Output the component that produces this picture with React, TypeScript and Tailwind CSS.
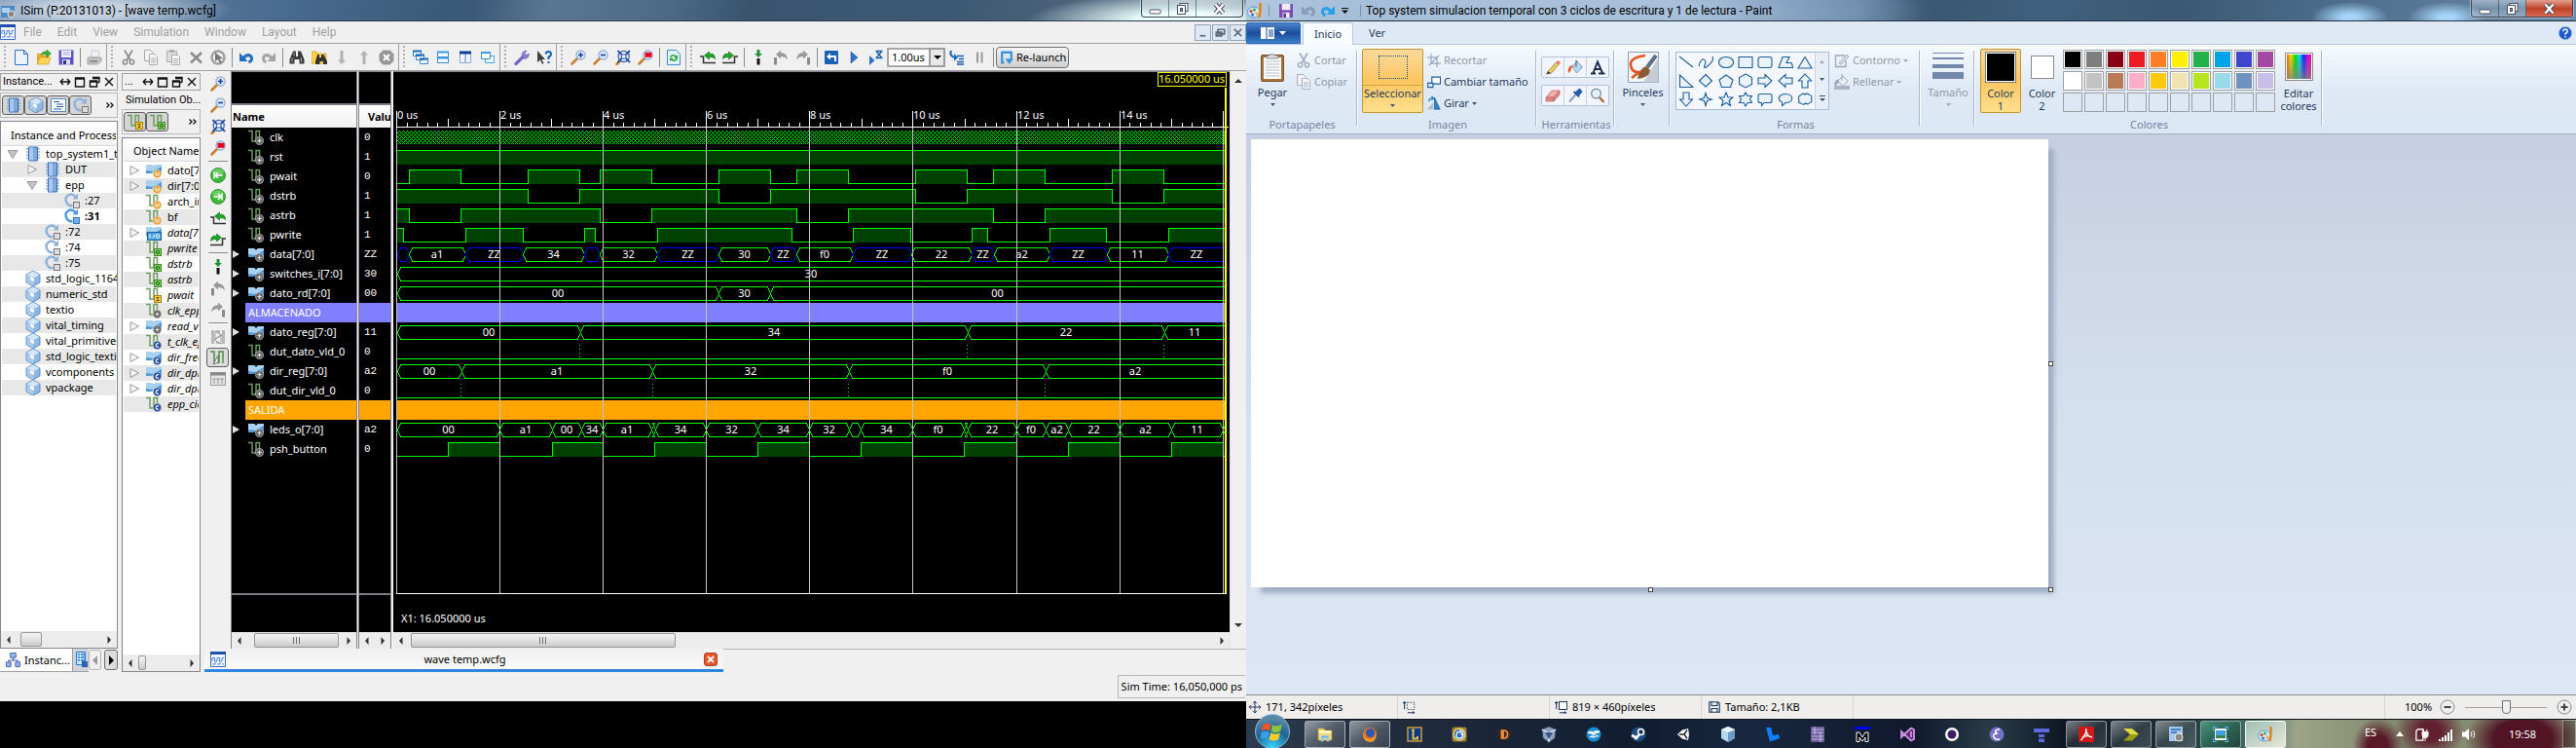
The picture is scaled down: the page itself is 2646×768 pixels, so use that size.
import React from "react";

type Kids = { children?: React.ReactNode };

function Svg({ children, s = "size-4", vb = "0 0 16 16" }: Kids & { s?: string; vb?: string }) {
  return (
    <svg className={`${s} block shrink-0`} viewBox={vb} fill="none" aria-hidden="true">
      {children}
    </svg>
  );
}

/* ------------------------------------------------------------------ */
/* Simulator icons                                                     */
/* ------------------------------------------------------------------ */

const Lens = ({ children }: Kids) => (
  <Svg>
    <path d="M1.5 14.5 7 9" stroke="#c8802e" strokeWidth="2.6" strokeLinecap="round" />
    <circle cx="10.5" cy="5.5" r="4.6" fill="#dbe8fb" stroke="#8fa9d8" strokeWidth="1.2" />
    {children}
  </Svg>
);
const ZoomIn = () => (
  <Lens>
    <path d="M8 5.5h5M10.5 3v5" stroke="#1c3f94" strokeWidth="1.5" />
  </Lens>
);
const ZoomOut = () => (
  <Lens>
    <path d="M8 5.5h5" stroke="#1c3f94" strokeWidth="1.6" />
  </Lens>
);
const ZoomFit = () => (
  <Svg>
    <path d="M1.5 15 4 12.5" stroke="#c8802e" strokeWidth="2.6" strokeLinecap="round" />
    <circle cx="8.7" cy="7" r="5.6" fill="#e4edfb" stroke="#3c5ea8" strokeWidth="1.2" />
    <path d="M2.5 1 6.5 5M15 1l-4 4M2.5 13l4-4M15 13l-4-4" stroke="#2450a8" strokeWidth="1.8" />
    <rect x="6.4" y="5" width="4.6" height="4" fill="#fff" stroke="#2450a8" />
  </Svg>
);
const ZoomCursor = () => (
  <Lens>
    <rect x="7.5" y="2.8" width="7" height="5" fill="#e8001c" />
  </Lens>
);
const PrevEdge = () => (
  <Svg>
    <path d="M0 7h3.500v6.500H16" stroke="#333" strokeWidth="1.5" />
    <path d="M4.500 6 9.500 2v2.300h3q3 .7 3 5.200Q14 7.700 12 7.700H9.500V10z" fill="#22a428" stroke="#0b6e14" strokeWidth=".6" />
  </Svg>
);
const NextEdge = () => (
  <Svg>
    <path d="M0 13.500h12.500V7H16" stroke="#333" strokeWidth="1.5" />
    <path d="M11.500 6 6.500 2v2.300h-3q-3 .7-3 5.200Q2 7.700 4 7.700h2.500V10z" fill="#22a428" stroke="#0b6e14" strokeWidth=".6" />
  </Svg>
);
const AddMarker = () => (
  <Svg>
    <path d="M6.500 0h3v4h2.500L8 8 4 4h2.500z" fill="#1e8f3c" />
    <rect x="6.500" y="9" width="3" height="6.500" fill="#111" />
  </Svg>
);
const PrevMarker = () => (
  <Svg>
    <path d="M3 5 8 .5V3q6 0 7 7Q12 6.800 8 7v2.500z" fill="#9b9b9b" />
    <rect x="1" y="8" width="3" height="7.500" fill="#8b8b8b" />
  </Svg>
);
const NextMarker = () => (
  <Svg>
    <path d="M13 5 8 .5V3Q2 3 1 10q3-3.200 7-3v2.500z" fill="#9b9b9b" />
    <rect x="12" y="8" width="3" height="7.500" fill="#8b8b8b" />
  </Svg>
);
const GreenDot = ({ d }: { d: string }) => (
  <Svg>
    <circle cx="8" cy="8" r="7.500" fill="#3eb83a" stroke="#1f8a22" strokeWidth=".8" />
    <ellipse cx="8" cy="5" rx="5.500" ry="3.500" fill="#8be07c" opacity=".6" />
    <path d={d} stroke="#fff" strokeWidth="1.5" />
  </Svg>
);
const DocNew = () => (
  <Svg>
    <path d="M1.500.5h9l4 4v11h-13z" fill="#eaf3ff" stroke="#2f6fc4" />
    <path d="M10.500.5v4h4" stroke="#2f6fc4" />
  </Svg>
);
const FolderOpen = () => (
  <Svg>
    <path d="M1 4h5l1.500 2H13v9H1z" fill="#e9a92b" />
    <path d="M1 15 4 8h11l-2.500 7z" fill="#ffd45e" stroke="#c98a12" strokeWidth=".6" />
    <path d="M5 5q2-4 6-3V0l4.500 4L11 8V5.500Q8 4.500 5 5z" fill="#3fae35" stroke="#1d7a1c" strokeWidth=".5" />
  </Svg>
);
const Floppy = ({ c = "#5f55c8" }: { c?: string }) => (
  <Svg>
    <path d="M.5.5h15v15h-15z" fill={c} />
    <rect x="3" y="1" width="10" height="7" fill="#f4f4ff" />
    <path d="M4.500 3h7M4.500 5h7" stroke="#a9a5dd" />
    <rect x="4" y="10" width="8" height="5.500" fill="#dcdcf0" />
    <rect x="5" y="11" width="3" height="4" fill="#3b337c" />
  </Svg>
);
const Printer = () => (
  <Svg>
    <path d="M4 7 6 .5l7 1.500L12 8z" fill="#eef2fb" stroke="#b4b4b4" strokeWidth=".7" />
    <path d="M1 8h14v4l-4 3H1z" fill="#c4c4c4" stroke="#8c8c8c" strokeWidth=".6" />
    <path d="M3 12h8" stroke="#777" strokeWidth="1.400" />
  </Svg>
);
const Scissors = ({ c = "#8d8d8d" }: { c?: string }) => (
  <Svg>
    <path d="M4 .5 10 11M12 .5 6 11" stroke={c} strokeWidth="1.800" />
    <circle cx="4.500" cy="12.800" r="2.200" stroke={c} strokeWidth="1.500" />
    <circle cx="11.500" cy="12.800" r="2.200" stroke={c} strokeWidth="1.500" />
  </Svg>
);
const Copy = ({ c = "#a9a9a9" }: { c?: string }) => (
  <Svg>
    <path d="M1.500.5h6l3 3v8h-9z" fill="#f3f3f3" stroke={c} />
    <path d="M6.500 4.500h5l3 3v8h-8z" fill="#fafafa" stroke={c} />
    <path d="M8 9h5M8 11h5M8 13h5" stroke={c} />
  </Svg>
);
const Paste = () => (
  <Svg>
    <rect x="1.500" y="1.500" width="10" height="11" fill="#ddd" stroke="#b0b0b0" />
    <rect x="4" y="0" width="5" height="3" fill="#b0b0b0" />
    <path d="M6.500 5.500h6l2 2v8h-8z" fill="#fafafa" stroke="#a9a9a9" />
    <path d="M8 9.500h5M8 11.500h5M8 13.500h5" stroke="#a9a9a9" />
  </Svg>
);
const Cross = () => (
  <Svg>
    <path d="m3 3 11 10.500M14 3 3 13.500" stroke="#8c8c8c" strokeWidth="2.600" />
  </Svg>
);
const SelectAll = () => (
  <Svg>
    <circle cx="8" cy="8" r="6.500" stroke="#a0a0a0" strokeWidth="2.500" />
    <path d="m5 3 8 6-3.500.5L12 13l-2 1-2-4-3 2z" fill="#777" />
  </Svg>
);
const Undo = ({ c = "#1f6fc0", flip = false }: { c?: string; flip?: boolean }) => (
  <Svg>
    <g transform={flip ? "translate(16 0) scale(-1 1)" : undefined}>
      <path d="M5 8.500Q9 4 12.500 6.500q3 4-2 6.500" stroke={c} strokeWidth="3" />
      <path d="M1 3v9h8.500z" fill={c} />
    </g>
  </Svg>
);
const Binoculars = ({ c = "#3c3c3c" }: { c?: string }) => (
  <Svg>
    <path d="M4 1.500h3V7h2V1.500h3L15.500 10v4.500h-5V10h-5v4.500h-5V10z" fill={c} />
    <path d="M3 8v5M12.500 8v5M5 3v3" stroke="#b9b9b9" strokeWidth=".8" />
  </Svg>
);
const FolderFind = () => (
  <Svg>
    <path d="M0 2h5l1.500 2H15v10H0z" fill="#ffd04a" stroke="#c79a1c" strokeWidth=".7" />
    <path d="M6 5h2v3h2V5h2.500L16 12v3h-4v-3H8.500v3H4v-3z" fill="#333" />
  </Svg>
);
const ArrowV = ({ up = false }: { up?: boolean }) => (
  <Svg>
    <path d={up ? "M8 1l4 4.500H9.500V15h-3V5.500H4z" : "M8 15l4-4.500H9.500V1h-3v9.500H4z"} fill="#b2b2b2" />
  </Svg>
);
const StopX = () => (
  <Svg>
    <path d="M4.500.5h7l4 4v7l-4 4h-7l-4-4v-7z" fill="#979797" />
    <path d="m5 5 6 6M11 5l-6 6" stroke="#fff" strokeWidth="2.200" />
  </Svg>
);
const Cascade = () => (
  <Svg>
    <path d="M.5 1.500h8v5h-8zM3.500 5.500h8v5h-8zM7.500 9.500h8v5h-8z" fill="#eef6ff" stroke="#3b8ad0" />
    <path d="M0 1.500h9M3 5.500h9M7 9.500h9" stroke="#1c67b8" strokeWidth="2" />
  </Svg>
);
const TileH = () => (
  <Svg>
    <path d="M2.500 2.500h11v5h-11zM2.500 8.500h11v5h-11z" fill="#f4faff" stroke="#3b8ad0" />
    <path d="M2 2.500h12M2 8.500h12" stroke="#3b9ae8" strokeWidth="2" />
  </Svg>
);
const TileV = () => (
  <Svg>
    <path d="M2.500 2.500h5.500v11H2.500zM8 2.500h5.500v11H8z" fill="#f0f4fa" stroke="#8aa8cc" />
    <path d="M2 3h12" stroke="#0b3f96" strokeWidth="3" />
  </Svg>
);
const Float = () => (
  <Svg>
    <path d="M5.500 6.500h9v7h-9z" fill="#eef6ff" stroke="#49a5e6" />
    <path d="M1.500 2.500h9v7h-9z" fill="#fff" stroke="#3b8ad0" />
    <path d="M1 3h10" stroke="#3b9ae8" strokeWidth="2" />
  </Svg>
);
const Wrench = () => (
  <Svg>
    <path d="M2 14.500 9.500 7" stroke="#7468c4" strokeWidth="3.200" strokeLinecap="round" />
    <path d="M8 5.500Q8.500 1 13 1L11 3.500l1.500 2L15.500 4q0 5-5 5.500z" fill="#8c82d6" stroke="#5a4fae" strokeWidth=".5" />
  </Svg>
);
const WhatsThis = () => (
  <Svg>
    <path d="M1 1v12l3-2.500L6 15l1.500-1-2-4H9z" fill="#3f3f3f" />
    <path d="M9.500 4.500Q10 2 12.500 2t2.500 2.500q0 2-2.500 3v2.500M12.500 12v2" stroke="#1464b8" strokeWidth="2" />
  </Svg>
);
const Refresh = () => (
  <Svg>
    <path d="M1.500.5h9l4 4v11h-13z" fill="#e6f2ff" stroke="#3a8fd8" />
    <path d="M4.500 7.500q3-3.500 6 0M11.500 9.500q-3 3.500-6 0" stroke="#24a32c" strokeWidth="1.600" />
    <path d="m12 5v4H8.500zM4 12V8.500h3.500z" fill="#24a32c" />
  </Svg>
);
const Restart = () => (
  <Svg>
    <rect x="1" y="1" width="14" height="14" rx="1" fill="#1a63b4" />
    <path d="M12 12V7H6" stroke="#fff" strokeWidth="2" />
    <path d="M3 7l4-3.500v7z" fill="#fff" />
  </Svg>
);
const Play = () => (
  <Svg>
    <path d="M5 2v12l7-6z" fill="#2f70c8" stroke="#174f9e" strokeWidth=".5" />
  </Svg>
);
const PlayFor = () => (
  <Svg>
    <path d="M1 6v10l5.500-5z" fill="#2f70c8" />
    <path d="M7.500 1.500h7M7.500 8.500h7M8.500 2l5 6M13.500 2l-5 6" stroke="#1c5cac" strokeWidth="1.300" />
  </Svg>
);
const StepInto = () => (
  <Svg>
    <path d="M2 1Q0 7 6 8" stroke="#1c6cc0" strokeWidth="2.200" />
    <path d="m5 4 4 4-4 4z" fill="#1c6cc0" />
    <path d="M8 6.500h7M10 9.500h5M8 12.500h7M8 15h7" stroke="#1c5cac" strokeWidth="1.300" />
  </Svg>
);
const Pause = () => (
  <Svg>
    <path d="M6 2.500v11M10.500 2.500v11" stroke="#9a9a9a" strokeWidth="2" />
  </Svg>
);
const WaveDoc = () => (
  <Svg>
    <path d="M.5.5h15v15H.5z" fill="#f4f8ff" stroke="#3a6ac0" />
    <path d="M0 1.500h16" stroke="#1c4fae" strokeWidth="3" />
    <path d="M2 10V6.500h2.500V10H7V6.500h2.500V10H12V6.500h2M2 13h3v-2M7 13h3v-2M12 13h2" stroke="#4b82e0" />
  </Svg>
);
const Chip = () => (
  <Svg>
    <path d="M1 3h14M1 6h14M1 9h14M1 12h14" stroke="#6f8fbc" strokeWidth="1.200" />
    <path d="M3.500 1h9v14h-9z" fill="#7fa8de" stroke="#3c6cb0" />
    <path d="M4 1.500h4v13H4z" fill="#a8c8f0" />
  </Svg>
);
const Cube = () => (
  <Svg>
    <path d="M8 0l7 4v8l-7 4-7-4V4z" fill="#8fb8e4" stroke="#4c7ab4" strokeWidth=".8" />
    <path d="M8 .5 14.500 4 8 7.500 1.500 4z" fill="#d4e7fa" />
    <path d="M8 7.500v8L1.500 12V4z" fill="#a7caee" />
    <path d="M5 6v3l4 2.200V8z" fill="#fff" />
  </Svg>
);
const ListDoc = () => (
  <Svg>
    <rect x=".5" y="1.500" width="15" height="13" fill="#fafdff" stroke="#5a8cc8" />
    <path d="M3 4.500h6M6 7h7M6 9.500h7M3 12h8" stroke="#2c5ea8" strokeWidth="1.200" />
  </Svg>
);
const Proc = ({ on = false }: { on?: boolean }) => (
  <Svg>
    <path d="M11.500 4Q8 0 4 2.500T2.500 10q2 4 6 3" stroke={on ? "#4d98e6" : "#8fb2da"} strokeWidth="2.400" />
    <path d="M14 .5V6.500H8.500z" fill={on ? "#4d98e6" : "#8fb2da"} />
    <rect x="9.500" y="9.500" width="6" height="6" fill={on ? "#6fb0ee" : "#ddd"} stroke={on ? "#3a78c0" : "#777"} />
  </Svg>
);

type Badge = "u" | "o" | "i" | "c" | "p" | "io" | "";
function BadgeMark({ b }: { b: Badge }) {
  if (b === "o" || b === "i")
    return (
      <g>
        <rect x="8.500" y="8.500" width="7" height="7" fill={b === "o" ? "#7fd05c" : "#ffcf3e"} stroke={b === "o" ? "#3f8a28" : "#a57c10"} />
        {b === "o" ? <circle cx="12" cy="12" r="1.600" stroke="#1d5c10" /> : <path d="M10.500 10.500h3M12 10.500v3M10.500 13.500h3" stroke="#5c4204" />}
      </g>
    );
  if (b === "io")
    return (
      <g>
        <rect x="1.500" y="7.500" width="14" height="8" fill="#4aa4e2" stroke="#1c5f9e" />
        <path d="M4 9.500v4M7 13.500l2-4" stroke="#fff" />
        <circle cx="12" cy="11.500" r="1.700" stroke="#fff" />
      </g>
    );
  const fill = b === "u" ? "#eea02e" : b === "c" ? "#274f9f" : "#6a6a6a";
  return (
    <g>
      <circle cx="11.500" cy="11.500" r="4.200" fill={fill} stroke="#ddd" strokeWidth=".5" />
      {b === "u" && <path d="M10 9.500v2.500q1.500 2 3 0V9.500" stroke="#fff" strokeWidth="1.100" />}
      {b === "c" && <path d="M13 10q-1.500-1-2.500.5t0 2.200 2.500.5" stroke="#fff" strokeWidth="1.200" />}
      {b === "p" && <path d="M9.500 11.500h4M11.500 9.500v4" stroke="#ddd" strokeWidth="1.200" />}
    </g>
  );
}
const Sig = ({ b = "p" }: { b?: Badge }) => (
  <Svg>
    <path d="M0 1.500h4v10.500h4V1.500h3.500V9" stroke="#6f9a62" strokeWidth="1.500" />
    <BadgeMark b={b} />
  </Svg>
);
const Bus = ({ b = "p" }: { b?: Badge }) => (
  <Svg>
    <path d="M0 2h6l2 2 2-2h6v9h-6l-2-2-2 2H0z" fill="#4f9ad6" />
    <path d="M0 2h6l2 2 2-2h6v2L7 9 0 8z" fill="#a8d0f0" />
    <BadgeMark b={b} />
  </Svg>
);
const Tri = ({ open = false, c = "#9a9a9a", fill = "#f4f4f4" }: { open?: boolean; c?: string; fill?: string }) => (
  <Svg s="size-3" vb="0 0 12 12">
    <path d={open ? "M1 2.500h10l-5 8z" : "M2 1.500v9L10.500 6z"} stroke={c} fill={open ? "#c4c4c4" : fill} />
  </Svg>
);

/* ------------------------------------------------------------------ */
/* Simulator widgets                                                   */
/* ------------------------------------------------------------------ */

const Tool = ({ children, name }: Kids & { name: string }) => (
  <button aria-label={name} className="flex h-[22px] w-[23px] shrink-0 items-center justify-center">
    {children}
  </button>
);
const Sep = () => <span className="mx-[2px] h-5 w-px shrink-0 border-r border-[#8c8c8c] pr-px" />;
const VSep = () => <span className="my-[2px] h-[2px] w-5 border-t border-[#8c8c8c]" />;
const Group = ({ children }: Kids) => (
  <div className="flex h-full shrink-0 items-center border-r border-[#a0a0a0] pr-px">
    <span className="mx-[4px] h-6 w-[2px] bg-[repeating-linear-gradient(#b0b0b0_0_2px,transparent_2px_4px)]" />
    {children}
  </div>
);

function Toolbar() {
  return (
    <div className="flex h-[29px] shrink-0 items-center overflow-hidden border-y border-[#a0a0a0] bg-[#f0f0f0]">
      <Group>
        <Tool name="New"><DocNew /></Tool>
        <Tool name="Open"><FolderOpen /></Tool>
        <Tool name="Save"><Floppy /></Tool>
        <Sep />
        <Tool name="Print"><Printer /></Tool>
      </Group>
      <Group>
        <Tool name="Cut"><Scissors /></Tool>
        <Tool name="Copy"><Copy /></Tool>
        <Tool name="Paste"><Paste /></Tool>
        <Tool name="Delete"><Cross /></Tool>
        <Tool name="Select all"><SelectAll /></Tool>
        <Sep />
        <Tool name="Undo"><Undo /></Tool>
        <Tool name="Redo"><Undo c="#a4a4a4" flip /></Tool>
        <Sep />
        <Tool name="Find"><Binoculars /></Tool>
        <Tool name="Find in files"><FolderFind /></Tool>
        <Tool name="Find next"><ArrowV /></Tool>
        <Tool name="Find previous"><ArrowV up /></Tool>
        <Tool name="Stop"><StopX /></Tool>
      </Group>
      <Group>
        <Tool name="Cascade"><Cascade /></Tool>
        <Tool name="Tile horizontally"><TileH /></Tool>
        <Tool name="Tile vertically"><TileV /></Tool>
        <Tool name="Float"><Float /></Tool>
      </Group>
      <Group>
        <Tool name="Preferences"><Wrench /></Tool>
        <Tool name="What's this"><WhatsThis /></Tool>
      </Group>
      <Group>
        <Tool name="Zoom in"><ZoomIn /></Tool>
        <Tool name="Zoom out"><ZoomOut /></Tool>
        <Tool name="Zoom to full view"><ZoomFit /></Tool>
        <Tool name="Zoom to cursor"><ZoomCursor /></Tool>
        <Sep />
        <Tool name="Refresh"><Refresh /></Tool>
      </Group>
      <div className="flex shrink-0 items-center">
        <span className="mx-[4px] h-6 w-[2px] bg-[repeating-linear-gradient(#b0b0b0_0_2px,transparent_2px_4px)]" />
        <Tool name="Previous transition"><PrevEdge /></Tool>
        <Tool name="Next transition"><NextEdge /></Tool>
        <Sep />
        <Tool name="Add marker"><AddMarker /></Tool>
        <Tool name="Previous marker"><PrevMarker /></Tool>
        <Tool name="Next marker"><NextMarker /></Tool>
        <Sep />
        <Tool name="Restart"><Restart /></Tool>
        <Tool name="Run all"><Play /></Tool>
        <Tool name="Run for"><PlayFor /></Tool>
        <div className="relative h-5 w-[60px] shrink-0">
          <select aria-label="Run time" defaultValue="1.00us" className="block h-full w-full appearance-none border-2 border-[#a8a8a8] bg-white pl-[3px] text-[11px] leading-4 text-black">
            <option>1.00us</option>
          </select>
          <span className="pointer-events-none absolute top-0 right-0 flex h-5 w-[17px] items-center justify-center border-2 border-[#9c9c9c] bg-[#e8e8e8]">
            <Svg s="h-1 w-2" vb="0 0 8 4"><path d="M0 0h8L4 4z" fill="#000" /></Svg>
          </span>
        </div>
        <Tool name="Step"><StepInto /></Tool>
        <Tool name="Break"><Pause /></Tool>
        <Sep />
        <button className="flex h-[22px] w-[75px] shrink-0 items-center gap-[3px] rounded-sm border border-[#707070] bg-linear-to-b from-[#f4f4f4] to-[#cfcfcf] px-[3px] text-[11px] leading-4 whitespace-nowrap text-black">
          <Svg s="size-[14px]">
            <path d="M5 14H2.500V2h11v9" stroke="#3a94e0" strokeWidth="2.600" />
            <path d="M6.500 9.500H16L11 16z" fill="#3a94e0" />
          </Svg>
          Re-launch
        </button>
      </div>
    </div>
  );
}

const DockTitle = ({ children }: Kids) => (
  <div className="flex h-[18px] shrink-0 items-center gap-[3px] border border-[#a0a0a0] bg-[#f0f0f0] px-[2px]">
    <span className="min-w-0 flex-1 overflow-hidden font-['Roboto','Noto_Sans',sans-serif] whitespace-nowrap">{children}</span>
    {[
      "M1 6h10M1 6l3-3M1 6l3 3M11 6 8 3M11 6 8 9",
      "M1.500 2h9v9h-9zM1.500 3h9",
      "M4 1.500h7v5M4 2.500h7M1.500 5h7v6h-7zM1.500 6h7M11 6.500H8.500",
      "M2 2l8 8M10 2l-8 8",
    ].map((d, i) => (
      <button key={i} aria-label={["Move", "Maximize", "Float", "Close"][i]}>
        <Svg s="size-3" vb="0 0 12 12"><path d={d} stroke="#111" strokeWidth="1.400" /></Svg>
      </button>
    ))}
  </div>
);
const Toggle = ({ children, name }: Kids & { name: string }) => (
  <button aria-label={name} className="flex h-[20px] w-[23px] shrink-0 items-center justify-center rounded-[3px] border border-[#606060] bg-[#d4d4d4]">
    {children}
  </button>
);
const Chevrons = () => (
  <button aria-label="More" className="ml-auto pr-[3px]">
    <Svg s="h-[6px] w-2" vb="0 0 8 6"><path d="m.5.5 2.500 2.500L.5 5.500M4.500.5 7 3 4.500 5.500" stroke="#111" strokeWidth="1.300" /></Svg>
  </button>
);

const ScrollArrow = ({ d }: { d: string }) => (
  <button aria-label="Scroll" className="flex size-4 shrink-0 items-center justify-center">
    <Svg s="size-2" vb="0 0 8 8"><path d={d} fill="#333" /></Svg>
  </button>
);
const HBar = ({ thumb, grip = false }: { thumb: string; grip?: boolean }) => (
  <div className="flex h-[17px] shrink-0 items-center justify-between bg-[#ececec]">
    <ScrollArrow d="M5.500 0v8L2 4z" />
    <div className="flex h-full min-w-0 flex-1">
      {thumb && (
        <div className={`${thumb} flex h-[15px] items-center justify-center self-center rounded-[2px] border border-[#979797] bg-linear-to-b from-[#f4f4f4] via-[#e2e2e2] to-[#c8c8c8]`}>
          {grip && <span className="h-[7px] w-2 bg-[repeating-linear-gradient(90deg,#707070_0_1px,transparent_1px_3px)]" />}
        </div>
      )}
    </div>
    <ScrollArrow d="M2.500 0v8L6 4z" />
  </div>
);

const tree: { t: string; pad: string; icon: React.ReactNode; open?: boolean; tri?: boolean; bold?: boolean }[] = [
  { t: "top_system1_t", pad: "pl-[5px]", icon: <Chip />, tri: true, open: true },
  { t: "DUT", pad: "pl-[25px]", icon: <Chip />, tri: true },
  { t: "epp", pad: "pl-[25px]", icon: <Chip />, tri: true, open: true },
  { t: ":27", pad: "pl-[45px]", icon: <Proc /> },
  { t: ":31", pad: "pl-[45px]", icon: <Proc on />, bold: true },
  { t: ":72", pad: "pl-[25px]", icon: <Proc /> },
  { t: ":74", pad: "pl-[25px]", icon: <Proc /> },
  { t: ":75", pad: "pl-[25px]", icon: <Proc /> },
  ...["std_logic_1164", "numeric_std", "textio", "vital_timing", "vital_primitives", "std_logic_textio", "vcomponents", "vpackage"].map((t) => ({
    t,
    pad: "pl-[5px]",
    icon: <Cube />,
  })),
];

function InstancesDock() {
  return (
    <section className="flex w-[121px] shrink-0 flex-col pt-[2px]">
      <DockTitle>Instance...</DockTitle>
      <div className="mt-[2px] mb-[3px] flex h-[26px] items-center border border-[#b8b8b8] pl-px">
        <Toggle name="Instances"><Chip /></Toggle>
        <Toggle name="Packages"><Cube /></Toggle>
        <Toggle name="Sources"><ListDoc /></Toggle>
        <Toggle name="Processes"><Proc /></Toggle>
        <Chevrons />
      </div>
      <div className="flex min-h-0 flex-1 flex-col border border-[#828790] bg-white">
        <div className="mx-px flex h-[25px] shrink-0 items-end overflow-hidden border-b border-[#d8d8d8] bg-linear-to-b from-white to-[#f2f2f2] pb-[2px] pl-[9px] whitespace-nowrap">Instance and Process</div>
        <ul className="min-h-0 flex-1 overflow-hidden">
          {tree.map((r) => (
            <li key={r.t} className={`${r.pad} mx-px flex h-4 items-center whitespace-nowrap odd:bg-white even:bg-[#e8e8e8]`}>
              <span className="flex w-[19px] shrink-0">{r.tri && <Tri open={r.open} />}</span>
              {r.icon}
              <span className={r.bold ? "pl-[5px] font-bold" : "pl-[5px]"}>{r.t}</span>
            </li>
          ))}
        </ul>
        <HBar thumb="w-[22px] ml-1" />
      </div>
      <div className="flex h-[24px] shrink-0 overflow-hidden">
        <button className="flex w-[75px] items-center gap-1 border-r border-b border-[#a0a0a0] bg-white pl-[6px]">
          <Svg s="size-[15px]">
            <path d="M8 5v4M3 11V8.500h10V11" stroke="#2c4fa0" />
            <path d="M5 .5h6v5H5zM.5 10.500h5v5h-5zM10.500 10.500h5v5h-5z" fill="#9cb8f0" stroke="#3c60b4" />
          </Svg>
          Instanc...
        </button>
        <button aria-label="Files" className="flex w-4 items-start border-b border-[#a0a0a0] bg-[#cfd4dc] pt-[3px] pl-[3px]">
          <Svg s="h-4 w-3" vb="0 0 12 16">
            <path d="M.5.5h9v13h-9z" fill="#cde6ff" stroke="#1c78d0" />
            <path d="M2 3h2M5 3h4M2 6h2M5 6h4M2 9h2M5 9h4" stroke="#1c78d0" strokeWidth="1.500" />
            <path d="M6 10h6v6H6z" fill="#2c60b0" />
          </Svg>
        </button>
        <button aria-label="Previous tab" className="mt-px h-[21px] w-[13px] rounded-[3px] border border-[#b4b4b4] bg-[#f0f0f0] pl-[2px]">
          <Svg s="h-3 w-2" vb="0 0 8 12"><path d="M6 1v10L1 6z" fill="#9a9a9a" /></Svg>
        </button>
        <button aria-label="Next tab" className="mt-px ml-[3px] h-[21px] w-[14px] rounded-[3px] border border-[#707070] bg-[#dcdcdc] pl-[2px]">
          <Svg s="h-3 w-2" vb="0 0 8 12"><path d="M2 1v10l5-5z" fill="#000" /></Svg>
        </button>
      </div>
    </section>
  );
}

const objects: { t: string; bus: boolean; b: Badge; it: boolean; tri: boolean }[] = [
  { t: "dato[7:0]", bus: true, b: "u", it: false, tri: true },
  { t: "dir[7:0]", bus: true, b: "u", it: false, tri: true },
  { t: "arch_in", bus: false, b: "u", it: false, tri: false },
  { t: "bf", bus: false, b: "u", it: false, tri: false },
  { t: "data[7:0]", bus: true, b: "io", it: true, tri: true },
  { t: "pwrite", bus: false, b: "o", it: true, tri: false },
  { t: "dstrb", bus: false, b: "o", it: true, tri: false },
  { t: "astrb", bus: false, b: "o", it: true, tri: false },
  { t: "pwait", bus: false, b: "i", it: true, tri: false },
  { t: "clk_epp", bus: false, b: "p", it: true, tri: false },
  { t: "read_va", bus: true, b: "p", it: true, tri: true },
  { t: "t_clk_ep", bus: false, b: "c", it: true, tri: false },
  { t: "dir_frec", bus: true, b: "c", it: true, tri: true },
  { t: "dir_dpr", bus: true, b: "c", it: true, tri: true },
  { t: "dir_dpr", bus: true, b: "c", it: true, tri: true },
  { t: "epp_cic", bus: false, b: "c", it: true, tri: false },
];

function ObjectsDock() {
  return (
    <section className="flex w-[81px] shrink-0 flex-col pt-[2px]">
      <DockTitle>...</DockTitle>
      <div className="flex h-[19px] items-center overflow-hidden pl-[4px] font-['Roboto','Noto_Sans',sans-serif] whitespace-nowrap">Simulation Ob...</div>
      <div className="mb-[3px] flex h-[26px] items-center border border-[#b8b8b8] pl-px">
        <Toggle name="Inputs"><Sig b="i" /></Toggle>
        <Toggle name="Outputs"><Sig b="o" /></Toggle>
        <Chevrons />
      </div>
      <div className="flex min-h-0 flex-1 flex-col border border-[#828790] bg-white">
        <div className="mx-px flex h-6 shrink-0 items-end overflow-hidden border-b border-[#d8d8d8] bg-linear-to-b from-white to-[#f2f2f2] pb-[2px] pl-[10px] whitespace-nowrap">Object Name</div>
        <ul className="min-h-0 flex-1 overflow-hidden pt-px">
          {objects.map((r, i) => (
            <li key={i} className="mx-px flex h-4 items-center overflow-hidden pl-[5px] whitespace-nowrap odd:bg-white even:bg-[#e8e8e8]">
              <span className="flex w-[18px] shrink-0">{r.tri && <Tri />}</span>
              {r.bus ? <Bus b={r.b} /> : <Sig b={r.b} />}
              <span className={r.it ? "pl-[6px] italic" : "pl-[6px]"}>{r.t}</span>
            </li>
          ))}
        </ul>
        <HBar thumb="w-[8px] ml-0" />
      </div>
    </section>
  );
}

function SideTools() {
  return (
    <div className="flex w-[27px] shrink-0 flex-col items-center pt-[2px]">
      <Tool name="Zoom in"><ZoomIn /></Tool>
      <Tool name="Zoom out"><ZoomOut /></Tool>
      <Tool name="Zoom to full view"><ZoomFit /></Tool>
      <Tool name="Zoom to cursor"><ZoomCursor /></Tool>
      <VSep />
      <Tool name="Go to start"><GreenDot d="M12.500 8H5M8 5 5 8l3 3M4 4.500v7" /></Tool>
      <Tool name="Go to end"><GreenDot d="M3.500 8H11M8 5l3 3-3 3M12 4.500v7" /></Tool>
      <Tool name="Previous transition"><PrevEdge /></Tool>
      <Tool name="Next transition"><NextEdge /></Tool>
      <VSep />
      <Tool name="Add marker"><AddMarker /></Tool>
      <Tool name="Previous marker"><PrevMarker /></Tool>
      <Tool name="Next marker"><NextMarker /></Tool>
      <VSep />
      <Tool name="Swap cursors">
        <Svg>
          <path d="M1 1h3v14H1zM12 1h3v14h-3zM6 1h4v14H6z" fill="#b8b8b8" />
          <path d="M5 2l7 4-7 4zM11 6 4 11l7 4z" fill="#eee" stroke="#888" strokeWidth=".8" />
        </Svg>
      </Tool>
      <button aria-label="Snap to transition" className="flex h-5 w-[23px] items-center justify-center rounded-[3px] border border-[#606060] bg-[#dcdcdc]">
        <Svg>
          <path d="M0 2h4v11h5V2h4v12" stroke="#4d8f46" strokeWidth="1.500" />
          <path d="M3 15 8 6v7z" fill="#fff" stroke="#555" strokeWidth=".8" />
        </Svg>
      </button>
      <button aria-label="Floating ruler" className="mt-px flex h-[22px] w-[23px] items-center justify-center">
        <Svg>
          <rect x=".5" y="1.500" width="15" height="13" fill="#e4e4e4" stroke="#999" />
          <path d="M0 3h16" stroke="#888" strokeWidth="3" />
          <path d="M2 8h12M4 8v5M8 8v5M12 8v5" stroke="#999" />
        </Svg>
      </button>
    </div>
  );
}

const rows: { n: string; v: string; kind: "sig" | "bus" | "almacenado" | "salida" }[] = [
  { n: "clk", v: "0", kind: "sig" },
  { n: "rst", v: "1", kind: "sig" },
  { n: "pwait", v: "0", kind: "sig" },
  { n: "dstrb", v: "1", kind: "sig" },
  { n: "astrb", v: "1", kind: "sig" },
  { n: "pwrite", v: "1", kind: "sig" },
  { n: "data[7:0]", v: "ZZ", kind: "bus" },
  { n: "switches_i[7:0]", v: "30", kind: "bus" },
  { n: "dato_rd[7:0]", v: "00", kind: "bus" },
  { n: "ALMACENADO", v: "", kind: "almacenado" },
  { n: "dato_reg[7:0]", v: "11", kind: "bus" },
  { n: "dut_dato_vld_0", v: "0", kind: "sig" },
  { n: "dir_reg[7:0]", v: "a2", kind: "bus" },
  { n: "dut_dir_vld_0", v: "0", kind: "sig" },
  { n: "SALIDA", v: "", kind: "salida" },
  { n: "leds_o[7:0]", v: "a2", kind: "bus" },
  { n: "psh_button", v: "0", kind: "sig" },
];

function NameColumn() {
  return (
    <div className="flex w-[130px] shrink-0 flex-col border border-b-0 border-[#868290] bg-black text-white">
      <div className="h-[34px] shrink-0 border-b-2 border-[#7c7a84]" />
      <div className="flex h-[23px] shrink-0 items-center bg-linear-to-b from-white to-[#f0f0f0] pl-px font-bold text-black">Name</div>
      {rows.map((r) =>
        r.kind === "almacenado" || r.kind === "salida" ? (
          <div key={r.n} className={`${r.kind === "salida" ? "bg-[#ffa500]" : "bg-[#8080ff]"} ml-[14px] flex h-5 shrink-0 items-center pl-[3px]`}>{r.n}</div>
        ) : (
          <div key={r.n} className="flex h-5 shrink-0 items-center">
            <span className="w-[17px] shrink-0">
              {r.kind === "bus" && <Svg s="ml-px h-2 w-[7px]" vb="0 0 7 8"><path d="M0 0v8l7-4z" fill="#e0e0e0" /></Svg>}
            </span>
            {r.kind === "bus" ? <Bus /> : <Sig />}
            <span className="pl-[6px] whitespace-nowrap">{r.n}</span>
          </div>
        ),
      )}
      <div className="flex-1" />
      <div className="h-10 shrink-0 border-t-2 border-[#7c7a84]" />
      <HBar thumb="w-[87px] ml-[7px]" grip />
    </div>
  );
}

function ValueColumn() {
  return (
    <div className="ml-px flex w-[34px] shrink-0 flex-col border border-b-0 border-[#868290] bg-black text-white">
      <div className="h-[34px] shrink-0 border-b-2 border-[#7c7a84]" />
      <div className="flex h-[23px] shrink-0 items-center overflow-hidden bg-linear-to-b from-white to-[#f0f0f0] pl-[9px] font-bold text-black">Value</div>
      {rows.map((r) => (
        <div key={r.n} className={`${r.kind === "salida" ? "bg-[#ffa500]" : r.kind === "almacenado" ? "bg-[#8080ff]" : "bg-black"} flex h-5 shrink-0 items-center pl-[5px] font-['Liberation_Mono',monospace]`}>{r.v}</div>
      ))}
      <div className="flex-1" />
      <div className="h-10 shrink-0 border-t-2 border-[#7c7a84]" />
      <HBar thumb="" />
    </div>
  );
}

/* ------------------------------------------------------------------ */
/* Waveform chart                                                      */
/* ------------------------------------------------------------------ */

const END = 1258;
const marks = [407, 513, 619, 725, 831, 937, 1044, 1150, 1256];
const rowTop = (i: number) => 131 + 20 * i;

function Bit({ row, high, edges }: { row: number; high: boolean; edges: number[] }) {
  const top = rowTop(row) + 3;
  const bot = rowTop(row) + 17;
  const pts = [407, ...edges, END];
  const fills: React.ReactNode[] = [];
  let level = high;
  let d = `M407 ${high ? top : bot}`;
  for (let k = 0; k < pts.length - 1; k++) {
    if (level) fills.push(<rect key={k} x={pts[k]} y={top} width={pts[k + 1] - pts[k]} height={15} fill="#004000" />);
    d += `H${pts[k + 1]}`;
    if (k < pts.length - 2) {
      level = !level;
      d += `V${level ? top : bot}`;
    }
  }
  return (
    <g>
      {fills}
      <path d={d} transform="translate(.5 .5)" stroke="#00ff00" />
    </g>
  );
}

type Seg = [number, string, boolean?];
function BusWave({ row, segs }: { row: number; segs: Seg[] }) {
  const t = rowTop(row) + 3;
  const m = t + 7;
  const b = t + 14;
  return (
    <g>
      {segs.map(([x, label, z], k) => {
        const last = k === segs.length - 1;
        const e = last ? END : segs[k + 1][0];
        const d = last
          ? `M${e} ${t}H${x + 3}L${x} ${m}L${x + 3} ${b}H${e}`
          : `M${x} ${m}L${x + 3} ${t}H${e - 3}L${e} ${m}L${e - 3} ${b}H${x + 3}Z`;
        return (
          <g key={k}>
            <path d={d} transform="translate(.5 .5)" stroke={z ? "#0000ff" : "#00ff00"} />
            <text x={(x + e) / 2} y={t + 11} fill="#fff" fontSize="11" textAnchor="middle">{label}</text>
          </g>
        );
      })}
    </g>
  );
}

const Dots = ({ row, at }: { row: number; at: number[] }) => (
  <g>
    {at.map((x) => (
      <path key={x} d={`M${x}.5 ${rowTop(row) + 3}v14`} stroke="#00ff00" strokeDasharray="1 3" />
    ))}
  </g>
);

function WaveChart() {
  const minor: React.ReactNode[] = [];
  for (let i = 0; i < 80; i++) {
    const x = Math.round(407 + i * 10.6125);
    if (i % 10) minor.push(<rect key={i} x={x} y={i % 5 ? 126 : 122} width={1} height={i % 5 ? 4 : 8} fill="#fff" />);
  }
  return (
    <svg className="block h-[575px] w-[858px] shrink-0" viewBox="404 74 858 575" fill="none" shapeRendering="crispEdges" role="img" aria-label="Waveforms">
      <defs>
        <pattern id="clk" width="4" height="4" patternUnits="userSpaceOnUse">
          <path d="M0 0h1v1H0zM1 1h1v1H1zM2 2h1v1H2zM3 3h1v1H3zM1 3h1v1H1zM3 1h1v1H3z" fill="#00f000" />
        </pattern>
      </defs>
      {minor}
      <rect x="407" y="130" width="855" height="1" fill="#fff" />
      {marks.map((x, i) => (
        <g key={x}>
          <rect x={x} y="114" width="1" height="17" fill="#fff" />
          {i < 8 && <text x={x + 1} y="122" fill="#fff" fontSize="11">{i * 2} us</text>}
        </g>
      ))}
      <rect x="408" y="134" width="850" height="14" fill="url(#clk)" />
      <Bit row={1} high edges={[]} />
      <Bit row={2} high={false} edges={[420, 473, 542, 595, 616, 669, 738, 791, 818, 871, 940, 993, 1020, 1073, 1142, 1195]} />
      <Bit row={3} high edges={[542, 595, 738, 791, 940, 993, 1142, 1195]} />
      <Bit row={4} high edges={[420, 473, 616, 669, 818, 871, 1020, 1073]} />
      <Bit row={5} high edges={[414, 478, 537, 600, 611, 675, 813, 876, 935, 998, 1014, 1078, 1136, 1200]} />
      <BusWave
        row={6}
        segs={[[408, "", true], [420, "a1"], [478, "ZZ", true], [537, "34"], [600, "", true], [616, "32"], [675, "ZZ", true], [738, "30"], [791, "ZZ", true], [818, "f0"], [876, "ZZ", true], [936, "22"], [998, "ZZ", true], [1021, "a2"], [1078, "ZZ", true], [1137, "11"], [1200, "ZZ", true]]}
      />
      <BusWave row={7} segs={[[408, "30"]]} />
      <BusWave row={8} segs={[[408, "00"], [738, "30"], [791, "00"]]} />
      <rect x="407" y={rowTop(9)} width="851" height="20" fill="#8080ff" />
      <BusWave row={10} segs={[[408, "00"], [596, "34"], [994, "22"], [1196, "11"]]} />
      <Bit row={11} high={false} edges={[]} />
      <Dots row={11} at={[595, 993, 1195]} />
      <BusWave row={12} segs={[[408, "00"], [474, "a1"], [670, "32"], [872, "f0"], [1074, "a2"]]} />
      <Bit row={13} high={false} edges={[]} />
      <Dots row={13} at={[473, 670, 871, 1073]} />
      <rect x="407" y={rowTop(14)} width="851" height="20" fill="#ffa500" />
      <BusWave
        row={15}
        segs={[[408, "00"], [513, "a1"], [567, "00"], [597, "34"], [619, "a1"], [669, ""], [673, "34"], [725, "32"], [778, "34"], [831, "32"], [872, ""], [884, "34"], [937, "f0"], [990, ""], [994, "22"], [1044, "f0"], [1074, "a2"], [1097, "22"], [1150, "a2"], [1203, "11"], [1256, ""]]}
      />
      <Bit row={16} high={false} edges={[460, 513, 567, 619, 672, 725, 778, 831, 884, 937, 990, 1044, 1097, 1150, 1203, 1256]} />
      {marks.map((x) => (
        <rect key={x} x={x} y="131" width="1" height="478" fill="#c4c4c4" />
      ))}
      <rect x="407" y="609" width="853" height="1" fill="#fff" />
      <rect x="1258" y="90" width="2" height="519" fill="#ffff00" />
      <rect x="1189.5" y="74.5" width="70" height="14" fill="#000" stroke="#ffff00" />
      <text x="1224" y="85" fill="#ffff00" fontSize="11" textAnchor="middle">16.050000 us</text>
      <text x="412" y="639" fill="#fff" fontSize="11">X1: 16.050000 us</text>
    </svg>
  );
}

const CaptionButtons = ({ red = false }: { red?: boolean }) => (
  <div className="flex h-[18px] shrink-0 self-start overflow-hidden rounded-b-[4px] border border-t-0 border-[#3c4656] shadow-[0_0_0_1px_#ffffff66]">
    {["Minimize", "Restore", "Close"].map((n, i) => (
      <button
        key={n}
        aria-label={n}
        className={`${i === 2 ? "w-[47px]" : "w-[28px] border-r border-[#3c4656]/60"} ${
          i === 2 && red ? "bg-linear-to-b from-[#e0a090] via-[#c04028] to-[#d86850]" : "bg-linear-to-b from-white/40 via-white/15 to-white/30"
        } flex items-center justify-center`}
      >
        <Svg s="h-3 w-[13px]" vb="0 0 13 12">
          {i === 0 && <rect x="1" y="7" width="11" height="4" rx="1" fill="#fff" stroke="#4a5060" />}
          {i === 1 && (
            <g fill="#fff" stroke="#4a5060">
              <rect x="4" y=".5" width="8" height="8" />
              <rect x="1.500" y="2.500" width="8" height="9" />
              <rect x="4.500" y="5.500" width="2" height="3" fill="#8894a8" />
            </g>
          )}
          {i === 2 && (
            <g>
              <path d="m2.500 1.500 8 9M10.500 1.500l-8 9" stroke="#4a4a58" strokeWidth="4.500" />
              <path d="m2.500 1.500 8 9M10.500 1.500l-8 9" stroke="#fff" strokeWidth="2.400" />
            </g>
          )}
        </Svg>
      </button>
    ))}
  </div>
);

function SimulatorWindow() {
  return (
    <div className="flex min-w-0 flex-col overflow-hidden bg-black font-['Noto_Sans','Open_Sans',sans-serif] text-[11px] leading-4">
      <div className="flex min-h-0 flex-1 flex-col bg-[#f0f0f0]">
        <header className="flex h-[22px] shrink-0 items-center border-b border-[#2c3848] bg-[radial-gradient(ellipse_150px_26px_at_90px_10px,#c2d0df_30%,transparent),radial-gradient(ellipse_160px_30px_at_95%_22px,#e8fffc_30%,transparent),linear-gradient(100deg,#6d8cab_0%,#47698d_24%,#3b5a78_36%,#3b5a78_38%,#5b7692_44%,#4b6884_54%,#3a546e_60%,#3d5872_76%,#5f7488_100%)]">
          <Svg>
            <rect x="1" y="3" width="14" height="12" fill="#4f8ac8" />
            <path d="M2 5h8v5H2z" fill="#a8d2f4" />
            <circle cx="11.500" cy="11.500" r="3.500" fill="#888" stroke="#eee" />
          </Svg>
          <h1 className="ml-[5px] font-['Roboto','Noto_Sans',sans-serif] text-[12px] text-black">ISim (P.20131013) - [wave temp.wcfg]</h1>
          <div className="mr-[3px] ml-auto flex self-start"><CaptionButtons /></div>
        </header>
        <nav className="flex h-[22px] shrink-0 items-center text-[12px] text-[#a0a0a0]">
          <WaveDoc />
          <div className="flex flex-1 gap-4 pl-2 font-['Roboto','Noto_Sans',sans-serif]">
            {["File", "Edit", "View", "Simulation", "Window", "Layout", "Help"].map((m) => (
              <button key={m}>{m}</button>
            ))}
          </div>
          <div className="flex gap-px">
            {["M5 11.500h6", "M5.500 4.500h7v5h-7zM3.500 7.500h6v4h-6z", "m4 4 8 8M12 4l-8 8"].map((d, i) => (
              <button key={d} aria-label={["Minimize", "Restore", "Close"][i]} className="flex size-[17px] items-center justify-center border border-[#90a4bc] bg-[#dde8f4]">
                <Svg s="size-[15px]"><path d={d} stroke="#5a6a7c" strokeWidth="1.800" /></Svg>
              </button>
            ))}
          </div>
        </nav>
        <Toolbar />
        <main className="flex min-h-0 flex-1 gap-1">
          <InstancesDock />
          <ObjectsDock />
          <div className="flex min-w-0 flex-1 flex-col">
            <div className="flex min-h-0 flex-1">
              <SideTools />
              <NameColumn />
              <ValueColumn />
              <div className="ml-[2px] flex min-w-0 flex-1 flex-col border-t border-[#868290]">
                <div className="flex min-h-0 flex-1 overflow-hidden bg-black"><WaveChart /></div>
                <HBar thumb="ml-[2px] w-[272px]" grip />
              </div>
              <div className="flex w-[17px] shrink-0 flex-col items-center justify-between border-l border-[#e4e4e4] pt-[2px] pb-4">
                <ScrollArrow d="M0 6h8L4 2z" />
                <ScrollArrow d="M0 2h8L4 6z" />
              </div>
            </div>
            <div className="flex h-6 shrink-0">
              <div className="flex w-[533px] items-center border-b-[3px] border-[#2f86e0] bg-linear-to-b from-[#f0f0f0] to-[#fafafa] px-[6px]">
                <WaveDoc />
                <span className="flex-1 text-center">wave temp.wcfg</span>
                <button aria-label="Close tab" className="flex size-[14px] items-center justify-center rounded-[3px] border border-[#b43c1c] bg-[#e4582e]">
                  <Svg s="size-2" vb="0 0 8 8"><path d="m1 1 6 6M7 1 1 7" stroke="#fff" strokeWidth="1.800" /></Svg>
                </button>
              </div>
              <div className="flex-1 border-t border-[#b8b8b8]" />
            </div>
          </div>
        </main>
        <footer className="flex h-[30px] shrink-0 items-center justify-end pr-px">
          <span className="border border-r-0 border-[#b8b8b8] px-[3px] py-[3px]">Sim Time: 16,050,000 ps</span>
        </footer>
      </div>
      <div className="h-12 shrink-0 bg-black" />
    </div>
  );
}

/* ------------------------------------------------------------------ */
/* Paint window                                                        */
/* ------------------------------------------------------------------ */

const Palette = () => (
  <Svg>
    <ellipse cx="7" cy="9.500" rx="6.500" ry="5.500" fill="#cfe6f6" stroke="#5a9ac8" />
    <circle cx="4" cy="8.500" r="1.500" fill="#e03c2c" />
    <circle cx="7.500" cy="7" r="1.500" fill="#3cae3c" />
    <circle cx="5.500" cy="12" r="1.500" fill="#2c6cd0" />
    <circle cx="10" cy="11" r="1.500" fill="#f0b020" />
    <path d="M13.500 0v8l-1 7" stroke="#e08424" strokeWidth="2.600" />
  </Svg>
);
const Caret = ({ c = "#44546a" }: { c?: string }) => (
  <Svg s="h-[3px] w-[5px]" vb="0 0 5 3"><path d="M0 0h5L2.500 3z" fill={c} /></Svg>
);

const RibbonGroup = ({ children, label, w }: Kids & { label: string; w: string }) => (
  <section className={`${w} relative flex shrink-0 flex-col`}>
    <div className="flex h-[74px] items-start">{children}</div>
    <div className="text-center text-[11px] leading-4 text-[#7485a2]">{label}</div>
    <span className="absolute top-[6px] right-0 h-[77px] w-[2px] border-l border-[#a9b8cf] bg-white" />
  </section>
);

const LineButton = ({ children, icon, dim = false, caret = false }: Kids & { icon: React.ReactNode; dim?: boolean; caret?: boolean }) => (
  <button className={`${dim ? "text-[#9098a6]" : "text-[#1e395b]"} flex h-[22px] items-center gap-[3px] whitespace-nowrap`}>
    {icon}
    {children}
    {caret && <Caret c={dim ? "#9ba6b8" : "#44546a"} />}
  </button>
);

const shapePaths = [
  "M1 2l14 11",
  "M1 12Q3 4 6 5t1 6 4 0 4-9",
  "M8 2.500c10 0 10 11 0 11s-10-11 0-11z",
  "M1 2.500h14v11H1z",
  "M3.500 2.500h9q2.500 0 2.500 2.500v6q0 2.500-2.500 2.500h-9Q1 13.500 1 11V5q0-2.500 2.500-2.500z",
  "M5 2.500h7l-3 6h5l2 5H1z",
  "M8 2.500 15 14H1z",
  "M1.500 2v12.500H15z",
  "M8 1.500 14.500 8 8 14 1.500 8z",
  "M8 2l7 5-2.500 7.500h-9L1 7z",
  "M8 1l6.500 3.500v7L8 15l-6.500-3.500v-7z",
  "M1 5h7V1.500L15 8l-7 6.500V11H1z",
  "M15 5H8V1.500L1 8l7 6.500V11h7z",
  "M5 15V8H1.500L8 1l6.500 7H11v7z",
  "M5 1v7H1.500L8 15l6.500-7H11V1z",
  "M8 1.500 9.500 6.500 14.500 8l-5 1.500L8 14.500 6.500 9.500 1.500 8l5-1.500z",
  "M8 1l2 5h5l-4 3.500 1.500 5L8 11.500l-4.500 3L5 9.500 1 6h5z",
  "M8 1l2 3.500h4.500L12.500 8l2 3.500H10L8 15l-2-3.500H1.500l2-3.500-2-3.500H6z",
  "M3 2.500h10q2 0 2 2v5q0 2-2 2H7L4.500 14.500v-3H3q-2 0-2-2v-5q0-2 2-2z",
  "M8 2.500c9 0 9 9 0 9L4.500 14.500 4.500 11C-1 8.500 1 2.500 8 2.500z",
  "M4 3.500Q6 1 8 3q3-2 4.500.5Q16 4 14.500 7.500q1.500 3-1.500 4Q11 14 8.500 12 6 14.500 4 12 .5 12 2 8.500 0 5 4 3.500z",
];

const swatches = [
  "bg-[#000000]", "bg-[#7f7f7f]", "bg-[#880015]", "bg-[#ed1c24]", "bg-[#ff7f27]", "bg-[#fff200]", "bg-[#22b14c]", "bg-[#00a2e8]", "bg-[#3f48cc]", "bg-[#a349a4]",
  "bg-[#ffffff]", "bg-[#c3c3c3]", "bg-[#b97a57]", "bg-[#ffaec9]", "bg-[#ffc90e]", "bg-[#efe4b0]", "bg-[#b5e61d]", "bg-[#99d9ea]", "bg-[#7092be]", "bg-[#c8bfe7]",
  "", "", "", "", "", "", "", "", "", "",
];

const toolGlyphs: [string, React.ReactNode][] = [
  ["Lápiz", <g key="p"><path d="M3 12.500 12 2.500l2.500 2L6 14.500z" fill="#f5d060" stroke="#8a6a2c" strokeWidth=".8" /><path d="m1 15.500 2-3.500 3 2.500z" fill="#444" /><path d="m11 3.500 2-2.500 3 2-2 2.500z" fill="#e87a6a" /></g>],
  ["Relleno", <g key="f"><path d="M5 7.500 10 2l5.500 6L9.500 14z" fill="#b8d8f0" stroke="#5a84a8" strokeWidth=".8" /><path d="M9 8V.5" stroke="#555" /><path d="M6 6Q0 6 1 14q3-2 3-5z" fill="#e8501e" /></g>],
  ["Texto", <path key="t" d="M1 14.500h5M9 14.500h6.500M3.500 14 8 2.500 13 14M5 10h6" stroke="#1c3050" strokeWidth="2" />],
  ["Borrador", <g key="b"><path d="M1 10 7 3h8l-6 7z" fill="#f4b0ac" stroke="#b8605c" strokeWidth=".7" /><path d="M1 10h8v4H1zM9 10l6-7v4l-6 7z" fill="#e08884" stroke="#b8605c" strokeWidth=".7" /></g>],
  ["Selector de color", <g key="s"><path d="m2 14.500 7-8" stroke="#8aa4c0" strokeWidth="2" /><path d="M8 4.500 12 8.500l3.500-4.500L12.500.5z" fill="#1c5cac" /><path d="m6.500 4 5.500 5.500" stroke="#1c3f74" strokeWidth="1.600" /></g>],
  ["Lupa", <g key="l"><path d="m10 10 4.500 5" stroke="#a8703c" strokeWidth="2.600" /><circle cx="6.500" cy="6" r="4.800" fill="#e4f0fa" stroke="#8494a8" strokeWidth="1.400" /></g>],
];

function ToolRow({ from }: { from: number }) {
  return (
    <div className="flex h-[22px] w-[70px] rounded-[2px] border border-[#b4c2d8] bg-[#f2f6fc]">
      {toolGlyphs.slice(from, from + 3).map(([n, g], i) => (
        <button key={n} aria-label={n} className={`${i ? "border-l border-[#c8d2e2]" : ""} flex flex-1 items-center justify-center`}>
          <Svg>{g}</Svg>
        </button>
      ))}
    </div>
  );
}

function Ribbon() {
  return (
    <div className="flex h-[92px] shrink-0 overflow-hidden border-b border-[#a3b2c8] bg-linear-to-b from-[#f6fafe] via-[#dfe9f5] to-[#dbe7f5] text-[11px] leading-4 text-[#1e395b]">
      <RibbonGroup label="Portapapeles" w="w-[115px]">
        <button className="mt-[8px] ml-[11px] flex w-8 flex-col items-center">
          <Svg s="h-[30px] w-6" vb="0 0 24 30">
            <rect x=".5" y="2.500" width="23" height="27" rx="1.500" fill="#a9743c" stroke="#7c5020" />
            <path d="M3 5h18v22H3z" fill="#fdfdfd" />
            <path d="M5 9h14M5 12h14M5 15h14M5 18h14M5 21h14M5 24h14" stroke="#b4bac4" />
            <path d="M6 6V3h3q1-3 6 0h3v3z" fill="#ddd" stroke="#777" strokeWidth=".8" />
          </Svg>
          <span className="mt-[3px]">Pegar</span>
          <span className="mt-[3px]"><Caret /></span>
        </button>
        <div className="mt-[5px] ml-[8px] flex flex-col">
          <LineButton dim icon={<Scissors c="#a4b0c2" />}>Cortar</LineButton>
          <LineButton dim icon={<Copy c="#a4b0c2" />}>Copiar</LineButton>
        </div>
      </RibbonGroup>
      <RibbonGroup label="Imagen" w="w-[184px]">
        <button className="mt-[4px] ml-1 flex h-[66px] w-[63px] flex-col items-center rounded-[2px] border border-[#c2962c] bg-linear-to-b from-[#fbd99c] via-[#fcc660] to-[#ffe08e]">
          <span className="mt-[6px] h-6 w-[30px] border border-dotted border-[#1c5080]" />
          <span className="mt-[6px] w-full border-t border-[#d8a03c] text-center">Seleccionar</span>
          <span className="mt-[3px]"><Caret /></span>
        </button>
        <div className="mt-[5px] ml-1 flex flex-col">
          <LineButton dim icon={<Svg s="size-[14px]"><path d="M4.500 0v11.500H16M0 4.500h11.500V16M2 14 14 2" stroke="#9aa8bc" strokeWidth="1.400" /></Svg>}>Recortar</LineButton>
          <LineButton icon={<Svg s="size-[14px]"><path d="M5.500 2.500h10v8h-10z" fill="#fff" stroke="#1c5c9e" strokeWidth="1.300" /><path d="M.8 9.500h6v5h-6z" fill="#e4f0fa" stroke="#1c5c9e" strokeWidth="1.300" /></Svg>}>Cambiar tamaño</LineButton>
          <LineButton caret icon={<Svg s="size-[14px]"><path d="M8.500 1v14H15z" fill="#2c84c8" stroke="#165a94" strokeWidth=".8" /><path d="M0 15h7V7z" fill="#b4bcc8" /><path d="M2 6q0-4 4-4M5 0l2.500 2L5 4.500" stroke="#1c78c8" strokeWidth="1.400" /></Svg>}>Girar</LineButton>
        </div>
      </RibbonGroup>
      <RibbonGroup label="Herramientas" w="w-[80px]">
        <div className="mt-[12px] ml-[4px] flex flex-col gap-[7px]">
          <ToolRow from={0} />
          <ToolRow from={3} />
        </div>
      </RibbonGroup>
      <RibbonGroup label="" w="w-[57px]">
        <button className="mt-[7px] flex w-full flex-col items-center">
          <Svg s="size-8" vb="0 0 32 32">
            <path d="M.5.5h31v31H.5z" fill="#f4f6f8" stroke="#8c9cb0" />
            <path d="M16 31.500 31.500 6v25.500z" fill="#c4ccd4" />
            <path d="M18 4Q2 6 3 14t9 7q-4 3-8 6" stroke="#e8501e" strokeWidth="2.600" />
            <path d="M20 16 29 4" stroke="#5c7088" strokeWidth="4" />
            <path d="M10 28q2-11 9-13l4 4q-1 8-13 9z" fill="#8a5c34" />
          </Svg>
          <span className="mt-[2px]">Pinceles</span>
          <span className="mt-[3px]"><Caret /></span>
        </button>
      </RibbonGroup>
      <RibbonGroup label="Formas" w="w-[257px]">
        <div className="mt-[7px] ml-[5px] flex h-[60px] w-[158px] border border-[#a9bbd4] bg-[#f4f8fd]">
          <div className="grid flex-1 grid-cols-7 items-center justify-items-center">
            {shapePaths.map((d, i) => (
              <button key={i} aria-label={`Forma ${i + 1}`}><Svg><path d={d} stroke="#1c5c9e" fill={i > 1 ? "#eaf3fb" : "none"} strokeWidth="1.100" /></Svg></button>
            ))}
          </div>
          <div className="flex w-[14px] flex-col items-center justify-around border-l border-[#c8d4e4] bg-[#e6eef8]">
            <Svg s="h-[3px] w-[5px]" vb="0 0 5 3"><path d="M0 3h5L2.500 0z" fill="#9aa6b6" /></Svg>
            <Caret />
            <Svg s="h-[6px] w-[6px]" vb="0 0 6 6"><path d="M0 .5h6" stroke="#44546a" /><path d="M0 3h6L3 6z" fill="#44546a" /></Svg>
          </div>
        </div>
        <div className="mt-[5px] ml-[5px] flex flex-col">
          <LineButton dim caret icon={<Svg><path d="M11 3H1.500v11.500H12V8" stroke="#9aa8bc" strokeWidth="1.300" fill="#eef2f8" /><path d="m5 11 8-9 2 2-8 8z" fill="#dde4ee" stroke="#9aa8bc" /></Svg>}>Contorno</LineButton>
          <LineButton dim caret icon={<Svg><path d="M0 12h16v4H0z" fill="#a8b4c6" /><path d="M4 7l5-5 5 5.500L8.500 12z" fill="#eef2f8" stroke="#9aa8bc" /><path d="M8 7V0M4 6Q0 7 1 12l3-3z" fill="#9aa8bc" stroke="#9aa8bc" /></Svg>}>Rellenar</LineButton>
        </div>
      </RibbonGroup>
      <RibbonGroup label="" w="w-[56px]">
        <button className="mt-[8px] flex w-full flex-col items-center text-[#9098a6]">
          <Svg s="h-7 w-8" vb="0 0 32 28"><path d="M0 0h32v1H0zM0 5h32v2H0zM0 12h32v4H0zM0 20h32v7H0z" fill="#7488ae" /></Svg>
          <span className="mt-[5px]">Tamaño</span>
          <span className="mt-[3px]"><Caret c="#9ba6b8" /></span>
        </button>
      </RibbonGroup>
      <RibbonGroup label="Colores" w="w-[357px]">
        <button className="mt-[4px] ml-[5px] flex h-[66px] w-[42px] flex-col items-center rounded-[2px] border border-[#c2962c] bg-linear-to-b from-[#fbd99c] via-[#fcc660] to-[#ffe08e] leading-[13px]">
          <span className="mt-[2px] mb-[4px] size-8 shrink-0 border border-[#7c7c7c] bg-black shadow-[inset_0_0_0_1px_#fff]" />
          Color
          <br />1
        </button>
        <button className="mt-[4px] flex h-[66px] w-[43px] flex-col items-center leading-[13px]">
          <span className="mt-[7px] mb-[8px] size-6 shrink-0 border border-[#8c8c8c] bg-white" />
          Color
          <br />2
        </button>
        <div className="mt-[5px] grid grid-cols-10 gap-[2px]">
          {swatches.map((c, i) => (
            <button key={i} aria-label={`Color ${i + 1}`} className={`${c ? "shadow-[inset_0_0_0_1px_#fff]" : ""} ${c} size-5 border border-[#a0a0a0]`} />
          ))}
        </div>
        <button className="mt-[8px] flex w-12 flex-col items-center leading-[13px]">
          <span className="mb-[6px] block size-[29px] border border-[#8c8c8c] bg-[linear-gradient(transparent,#808080cc),linear-gradient(90deg,#ff3000,#ffe000_18%,#00e000_36%,#00e0ff_52%,#0020ff_68%,#e000e0_84%,#ff0040)] shadow-[inset_0_0_0_1px_#fff]" />
          Editar
          <br />colores
        </button>
      </RibbonGroup>
    </div>
  );
}

function PaintTitle() {
  return (
    <header className="flex h-[22px] shrink-0 items-center border-b border-[#243040] bg-[radial-gradient(ellipse_40px_16px_at_83%_18px,#a4d4f8_20%,transparent),radial-gradient(ellipse_40px_16px_at_90.300%_18px,#a4d4f8_20%,transparent),radial-gradient(ellipse_380px_60px_at_24%_12px,#a8c0da_35%,transparent),linear-gradient(100deg,#b4cadf_0%,#86a6c8_22%,#5a7a9e_38%,#5a7a9e_46%,#3a5670_51%,#40607e_60%,#3c5872_70%,#4a6a88_80%,#6c8aa6_100%)] pl-px">
      <Palette />
      <span className="mx-[6px] h-3 w-px bg-[#7c90a8]" />
      <button aria-label="Guardar" className="mx-1"><Svg s="size-[14px]"><path d="M0 0h16v16H0z" fill="#7a4cb4" /><path d="M3 0h10v7H3zM4 10h8v6H4z" fill="#f0eaf8" /><path d="M5 11h3v5H5z" fill="#5c3494" /></Svg></button>
      <button aria-label="Deshacer" className="mx-1"><Undo c="#8a9cb4" /></button>
      <button aria-label="Rehacer"><Undo c="#28a0e8" flip /></button>
      <Svg s="mx-[6px] h-[6px] w-[7px]" vb="0 0 7 6"><path d="M0 .5h7" stroke="#111" /><path d="M0 2.500h7L3.500 6z" fill="#111" /></Svg>
      <span className="mr-[5px] ml-[6px] h-3 w-px bg-[#7c90a8]" />
      <h1 className="font-['Roboto','Noto_Sans',sans-serif] text-[12px] leading-4 whitespace-nowrap text-black">Top system simulacion temporal con 3 ciclos de escritura y 1 de lectura - Paint</h1>
      <div className="mr-[3px] ml-auto self-start"><CaptionButtons red /></div>
    </header>
  );
}

const Handle = ({ at }: { at: string }) => <span className={`${at} absolute size-[5px] border border-[#444] bg-white`} />;

function StatusBar() {
  const cell = "flex h-full items-center gap-[5px] border-r border-[#d8d4d4]";
  return (
    <footer className="flex h-[25px] shrink-0 items-center border-t border-[#8c8c8c] bg-[#f0eded] text-[11px] leading-4 text-black">
      <div className={`${cell} w-[156px] pl-[3px]`}>
        <Svg s="size-[12px]"><path d="M8 0v16M0 8h16M5.500 3 8 0l2.500 3M5.500 13 8 16l2.500-3M3 5.500 0 8l3 2.500M13 5.500 16 8l-3 2.500" stroke="#1e395b" strokeWidth="1.300" /></Svg>
        171, 342píxeles
      </div>
      <div className={`${cell} w-[156px] pl-[5px]`}>
        <Svg s="size-[13px]"><path d="M2 0v10M0 2h4M6 14.500h9M13 12.500v3.500" stroke="#1e395b" strokeWidth="1.300" /><path d="M5.500 1.500h9v9h-9z" stroke="#1e395b" strokeDasharray="2 1.500" /></Svg>
      </div>
      <div className={`${cell} w-[156px] pl-[5px]`}>
        <Svg s="size-[13px]"><path d="M2 0v10M0 2h4M6 14.500h9M13 12.500v3.500" stroke="#1e395b" strokeWidth="1.300" /><path d="M5.500.5h10v10h-10z" stroke="#1e395b" strokeWidth="1.300" fill="#fff" /></Svg>
        819 × 460píxeles
      </div>
      <div className={`${cell} w-[156px] pl-[7px]`}>
        <Svg s="size-[12px]"><path d="M1 1h12l2 2v12H1zM4 1v5h8V1M4 15v-5h8v5" stroke="#1e395b" strokeWidth="1.500" /></Svg>
        Tamaño: 2,1KB
      </div>
      <div className="flex-1" />
      <div className="flex h-full items-center border-l border-[#d8d4d4] pr-1">
        <span className="w-[56px] pl-5">100%</span>
        <button aria-label="Alejar"><Svg><circle cx="8" cy="8" r="7" fill="#eee" stroke="#8c8c8c" /><path d="M4.500 8h7" stroke="#444" strokeWidth="2" /></Svg></button>
        <input
          type="range"
          aria-label="Zoom"
          defaultValue={50}
          className="mx-[10px] h-4 w-[84px] appearance-none bg-transparent bg-[linear-gradient(#a0a0a0,#a0a0a0)] bg-size-[100%_1px] bg-center bg-no-repeat [&::-webkit-slider-thumb]:h-[14px] [&::-webkit-slider-thumb]:w-[9px] [&::-webkit-slider-thumb]:appearance-none [&::-webkit-slider-thumb]:rounded-b-[4px] [&::-webkit-slider-thumb]:border [&::-webkit-slider-thumb]:border-[#707070] [&::-webkit-slider-thumb]:bg-[#f0f0f0]"
        />
        <button aria-label="Acercar"><Svg><circle cx="8" cy="8" r="7" fill="#eee" stroke="#8c8c8c" /><path d="M4.500 8h7M8 4.500v7" stroke="#444" strokeWidth="2" /></Svg></button>
      </div>
    </footer>
  );
}

const apps: [string, number, React.ReactNode][] = [
  ["Explorador", 1, <g key="0"><path d="M1 2h6l1 2h7v10H1z" fill="#f2d468" stroke="#b8902c" strokeWidth=".6" /><path d="M2 4h12v3H2z" fill="#fff4c4" /><path d="M4 15V9h8v6h-2v-3H6v3z" fill="#6cb8ec" stroke="#e4f4ff" strokeWidth=".5" /></g>],
  ["Firefox", 1, <g key="1"><circle cx="8" cy="8" r="7" fill="#e8701c" /><circle cx="8.500" cy="6.500" r="4.500" fill="#2c58b4" /><path d="M1 5q1 9 8 8 6-1 5-9 2 12-6 12-8-1-7-11z" fill="#f4a028" /></g>],
  ["League", 0, <g key="2"><path d="M1 1h14v14H1z" fill="#0c3884" stroke="#c89c34" strokeWidth="1.500" /><path d="M5 3.500h3M6.500 3.500v9H11v-2.500" stroke="#e8bc4c" strokeWidth="2" /></g>],
  ["Hearthstone", 0, <g key="3"><rect x=".5" y=".5" width="15" height="15" rx="2" fill="#9c7c34" /><circle cx="8" cy="8" r="6" fill="#2c6cb0" stroke="#f0cc64" strokeWidth="1.500" /><path d="M8 4q4 0 4 4t-4 4-3-4 4-2 1 3" stroke="#e4f4ff" strokeWidth="1.400" /></g>],
  ["Dungeon", 0, <g key="4"><path d="M8 1l2 2.500h4V7l2 1-2 1.500v3.500h-4L8 15l-2-2H2V9L0 8l2-1.500V3.500h4z" fill="#402418" /><path d="M5.500 4H8q3.500 0 3.500 4T8 12H5.500zM7 4v8" stroke="#f0943c" strokeWidth="1.700" /></g>],
  ["VirtualBox", 0, <g key="5"><path d="M8 0l7 3-1 9-6 4-6-4-1-9z" fill="#8fa4c4" stroke="#3c4c6c" /><path d="M1 3l7 4 7-4M8 7v9" stroke="#e4ecf8" strokeWidth="1.400" /><path d="M4 6l4 7 4-7" fill="#3c5484" /></g>],
  ["OpenOffice", 0, <g key="6"><circle cx="8" cy="8" r="7.500" fill="#1c8cd0" /><path d="M2 6.500q3-2 5 0 3-3 7-1-4 0-6 3-3-2.500-6-2zM4 11q2-1.500 4 0 2-2 5-1" stroke="#fff" strokeWidth="1.300" /></g>],
  ["Steam", 0, <g key="7"><circle cx="8" cy="8" r="7.500" fill="#1c4c84" /><circle cx="10.500" cy="5.500" r="3" fill="#1c3050" stroke="#fff" strokeWidth="1.600" /><path d="M1 9l5 2.500 3-3.500" stroke="#fff" strokeWidth="2.600" /><circle cx="5.500" cy="11.500" r="2" fill="#fff" /></g>],
  ["Unity", 0, <g key="8"><path d="M2 8 7 3.500 13 2l1 6-1 6-6-1.500z" fill="#fff" /><path d="M4 8h5M9 8l3-4.500M9 8l3 4.500" stroke="#222" strokeWidth="1.400" /></g>],
  ["Caja", 0, <g key="9"><path d="M8 0l7 3v9l-7 4-7-4V3z" fill="#b4d8f0" /><path d="M8 6v10l7-4V3z" fill="#6c9cc4" /><path d="M1 3l7 3 7-3-7-3z" fill="#eaf6ff" /></g>],
  ["Launcher", 0, <path key="10" d="M1 1h5l2 8 6-1 1 4-10 3.500z" fill="#0c80ff" />],
  ["Eclipse", 0, <g key="11"><rect x="1" y="0" width="14" height="16" fill="#6c5c9c" /><path d="M2 3h12M2 6h12M2 10h12M2 13h12M5 0v8M11 6v10" stroke="#c4bce4" /></g>],
  ["ModelSim", 0, <g key="12"><path d="M0 0h16v3H0z" fill="#0000f0" /><path d="M2 15.500V6h3l3 5 3-5h3v9.500h-3V11l-3 4-3-4v4.500z" fill="#000" stroke="#fff" /></g>],
  ["Visual Studio", 0, <path key="13" d="M2 5v6l3-3zM5 8l7-6.500 3 1.500v10l-3 1.500zM12 5v6" stroke="#c898e0" strokeWidth="1.800" fill="#68217a" />],
  ["Eclipse IDE", 0, <g key="14"><circle cx="8" cy="8" r="7" fill="#fff" /><circle cx="8" cy="8" r="4.500" fill="#3c1c64" /></g>],
  ["Emacs", 0, <g key="15"><circle cx="8" cy="8" r="7.500" fill="#7470c4" /><path d="M11 2.500Q4 4 8 7q-5 1-3 4t6 2" stroke="#fff" strokeWidth="1.600" /></g>],
  ["Terminal", 0, <path key="16" d="M0 2h16v4H0zM5 8h6v3H5zM5 12.500h6V16H5z" fill="#5c68e0" />],
  ["Acrobat", 2, <g key="17"><path d="M0 0h16v16H0z" fill="#d01818" /><path d="M7.500 2q2 4-5 12M8 4q0 6 6 7M4 11q5-3 10 0" stroke="#fff" strokeWidth="1.400" /></g>],
  ["Xilinx", 2, <g key="18"><path d="M0 2h9l7 6H7z" fill="#dcdc3c" /><path d="M7 8h9l-7 6.500H0z" fill="#9c9c14" /></g>],
  ["ISim", 2, <g key="19"><rect x="1" y="0" width="14" height="15" fill="#a4c8ec" /><path d="M3 3h10M3 6h6" stroke="#2c68b4" strokeWidth="1.600" /><circle cx="11" cy="11" r="4" fill="#888" stroke="#eee" /></g>],
  ["Imágenes", 3, <g key="20"><rect x="2" y="2" width="12" height="12" fill="#eaf6ff" /><path d="M3 4h10v5H3z" fill="#3ca0e0" /><path d="M3 9h10v3H3z" fill="#3c8454" /><path d="M0 4V0h4M12 0h4v4M16 12v4h-4M4 16H0v-4" stroke="#4cb4f0" strokeWidth="2" /></g>],
  ["Paint", 4, null],
];
const appBg = [
  "border-transparent",
  "border-[#c4ccd4]/70 bg-linear-to-br from-white/50 via-white/20 to-white/10",
  "border-[#c4ccd4]/60 bg-linear-to-br from-white/45 via-white/10 to-white/15",
  "border-[#c4ccd4]/60 bg-linear-to-br from-[#4c9480] via-[#2c6454] to-[#24443c]",
  "border-white/80 bg-linear-to-br from-[#9cc0b4] via-[#c4d4c8] to-[#e8e8d4]",
];

function Taskbar() {
  return (
    <div className="relative flex h-[30px] shrink-0 items-center border-t border-[#0c141c] bg-[radial-gradient(ellipse_26px_30px_at_85.100%_28px,#581828_40%,transparent),radial-gradient(ellipse_36px_30px_at_89%_12px,#602030_30%,transparent),radial-gradient(ellipse_60px_40px_at_96%_20px,#501424_50%,transparent),linear-gradient(90deg,#2c3c50_0%,#243040_8%,#101c30_30%,#182840_38%,#10182c_50%,#283c48_56%,#0c1420_62%,#1c2c34_68%,#2c4a4a_73%,#4c7468_76%,#9ca488_79%,#7c8468_88%,#9ca088_100%)] pl-[58px]">
      <button aria-label="Inicio" className="absolute -top-[6px] left-[9px] flex size-9 items-center justify-center rounded-full border border-[#8cb8d4] bg-[radial-gradient(circle_at_50%_100%,#3cd8ff,#1c6494_50%,#5c88a8_80%)]">
        <Svg s="size-6">
          <path d="M1.500 3.500Q4 1.500 7 3L6 7.500Q3.500 6 .5 7.500z" fill="#e8582c" />
          <path d="M8 3.500q3 1.500 6.500-.5L13.500 8Q10 9.500 7 8z" fill="#8cc43c" />
          <path d="M.3 8.500q3-1.500 5.500 0L4.700 13Q2 12-.5 13z" fill="#3c9ce8" />
          <path d="M6.800 9q3 1.500 6.500 0l-1.200 4.500Q9 15 5.700 13.500z" fill="#ffcc2c" />
        </Svg>
      </button>
      {apps.map(([n, k, g]) => (
        <button key={n} aria-label={n} className={`${appBg[k]} mx-[2px] flex h-[28px] w-[42px] shrink-0 items-center justify-center rounded-[3px] border`}>
          {g ? <Svg>{g}</Svg> : <Palette />}
        </button>
      ))}
      <div className="ml-auto flex h-full items-center text-[11px] leading-4 text-white">
        <span className="w-8 pb-1">ES</span>
        <Svg s="h-[5px] w-2" vb="0 0 8 5"><path d="M0 5h8L4 0z" fill="#fff" /></Svg>
        <Svg s="ml-3 size-[14px]"><path d="M3 2h6v13H1V4z" stroke="#fff" strokeWidth="1.500" /><path d="M8 5h7v4q0 3-3.500 3T8 9zM9.500 5V2M13.500 5V2M11.500 12v4" stroke="#fff" fill="#fff" /></Svg>
        <Svg s="ml-[9px] size-4"><path d="M1 13h2v2H1zM4 11h2v4H4zM7 9h2v6H7zM10 6h2v9h-2zM13 3h2v12h-2z" fill="#fff" /></Svg>
        <Svg s="ml-2 size-4"><path d="M1 5.500h3L8 2v12l-4-3.500H1z" fill="#fff" /><path d="M10 5.500q2 2.500 0 5M12 4q3.500 4 0 8" stroke="#fff" /></Svg>
        <span className="ml-[33px] w-[55px]">19:58</span>
        <button aria-label="Mostrar escritorio" className="h-full w-[14px] border border-white/40 bg-black/30" />
      </div>
    </div>
  );
}

function PaintWindow() {
  return (
    <div className="flex min-w-0 flex-col overflow-hidden font-['Noto_Sans','Open_Sans',sans-serif]">
      <PaintTitle />
      <nav className="flex h-6 shrink-0 items-end border-b border-[#b9c9de] bg-[#dfe9f5] text-[11px] leading-4 text-[#1e395b]">
        <button aria-label="Menú Paint" className="flex h-[22px] w-[56px] items-center justify-center gap-[5px] rounded-t-[2px] border border-[#2c68b8] bg-linear-to-b from-[#4c84cc] via-[#1c4c9c] to-[#3c80cc]">
          <Svg s="h-3 w-[14px]" vb="0 0 14 12"><path d="M0 0h14v12H0z" fill="#fff" /><path d="M6 0v12M8 3h5M8 5h5M8 7h5M8 9h5" stroke="#1c4c9c" /></Svg>
          <Svg s="h-1 w-[7px]" vb="0 0 7 4"><path d="M0 0h7L3.500 4z" fill="#fff" /></Svg>
        </button>
        <button className="-mb-px ml-[2px] h-[23px] w-[52px] rounded-t-[3px] border border-b-0 border-[#b9c9de] bg-[#f8fbff]">Inicio</button>
        <button className="ml-4 h-[22px]">Ver</button>
        <button aria-label="Ayuda" className="mr-1 mb-1 ml-auto">
          <Svg s="size-[14px]"><circle cx="8" cy="8" r="7.500" fill="#1c58d0" stroke="#8cb0e8" /><path d="M5.500 6q0-2.500 2.500-2.500T10.500 6q0 1.500-2.500 2.500V10M8 11.500v1.500" stroke="#fff" strokeWidth="1.700" /></Svg>
        </button>
      </nav>
      <Ribbon />
      <main className="min-h-0 flex-1 overflow-hidden bg-linear-to-b from-[#c6cfe1] via-[#d5e0ee] to-[#dce6f4] pt-[5px] pl-[5px]">
        <div className="relative h-[460px] w-[819px] bg-white shadow-[8px_8px_5px_-2px_#a0adc4]">
          <Handle at="top-[228px] -right-[5px]" />
          <Handle at="-right-[5px] -bottom-[5px]" />
          <Handle at="-bottom-[5px] left-[408px]" />
        </div>
      </main>
      <StatusBar />
      <Taskbar />
    </div>
  );
}

export default function App() {
  return (
    <div className="grid h-screen min-h-[768px] grid-cols-[1280fr_1366fr] overflow-hidden">
      <SimulatorWindow />
      <PaintWindow />
    </div>
  );
}
